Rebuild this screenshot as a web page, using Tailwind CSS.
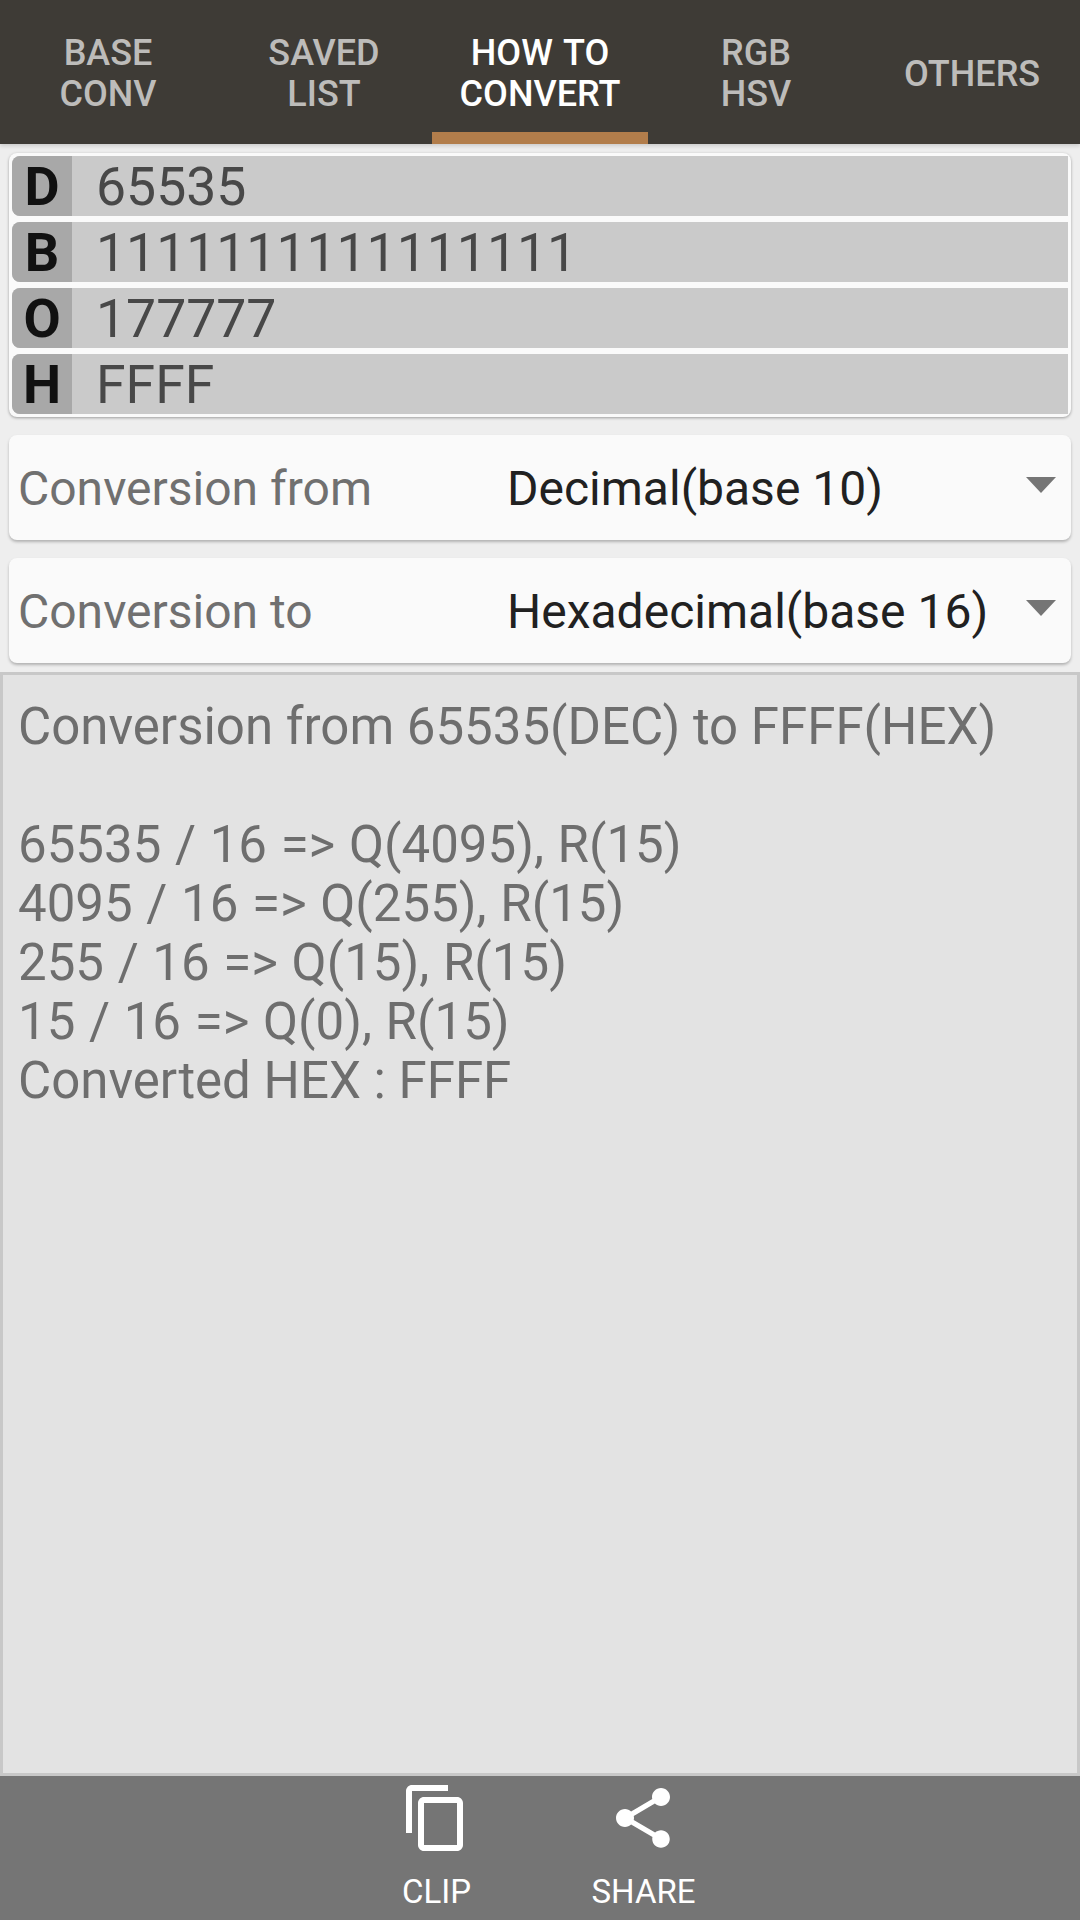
<!DOCTYPE html>
<html lang="en">
<head>
    <meta charset="UTF-8">
    <meta name="viewport" content="width=device-width, initial-scale=1.0">
    <title>How to convert</title>
    <script src="https://cdn.jsdelivr.net/npm/@tailwindcss/browser@4"></script>
</head>
<body class="m-0 bg-[#eeeeee] font-['Roboto',sans-serif]">
    <div class="w-[1080px] h-[1920px] flex flex-col overflow-hidden">
        <!-- tabs -->
        <div class="h-[144px] shrink-0 bg-[#3e3b36] flex text-[36px] leading-[41px] font-medium text-[#bdbcba] text-center shadow-[0_2px_4px_rgba(0,0,0,0.15)] relative">
            <div class="w-[216px] flex items-center justify-center pt-[4px]">BASE<br>CONV</div>
            <div class="w-[216px] flex items-center justify-center pt-[4px]">SAVED<br>LIST</div>
            <div class="w-[216px] flex items-center justify-center text-white border-b-[12px] border-[#b27d4b] pt-[16px] [word-spacing:2px]">HOW TO<br>CONVERT</div>
            <div class="w-[216px] flex items-center justify-center pt-[4px]">RGB<br>HSV</div>
            <div class="w-[216px] flex items-center justify-center pt-[4px]">OTHERS</div>
        </div>

        <!-- values -->
        <div class="mt-[9px] mx-[9px] h-[264px] shrink-0 rounded-[8px] bg-[#fafafa] p-[3px] flex flex-col gap-[6px] shadow-[0_1px_3px_rgba(0,0,0,0.35)]">
            <div class="h-[60px] flex bg-[#cacaca] rounded-l-[8px]">
                <div class="w-[60px] pt-[2px] bg-[#a8a8a8] rounded-l-[8px] flex items-center justify-center text-[54px] leading-[58px] font-bold text-[#111111]">D</div>
                <div class="pl-[24px] pt-[2px] flex items-center text-[53.5px] leading-[58px] text-[#484848]">65535</div>
            </div>
            <div class="h-[60px] flex bg-[#cacaca] rounded-l-[8px]">
                <div class="w-[60px] pt-[2px] bg-[#a8a8a8] rounded-l-[8px] flex items-center justify-center text-[54px] leading-[58px] font-bold text-[#111111]">B</div>
                <div class="pl-[24px] pt-[2px] flex items-center text-[53.5px] leading-[58px] text-[#484848]">1111111111111111</div>
            </div>
            <div class="h-[60px] flex bg-[#cacaca] rounded-l-[8px]">
                <div class="w-[60px] pt-[2px] bg-[#a8a8a8] rounded-l-[8px] flex items-center justify-center text-[54px] leading-[58px] font-bold text-[#111111]">O</div>
                <div class="pl-[24px] pt-[2px] flex items-center text-[53.5px] leading-[58px] text-[#484848]">177777</div>
            </div>
            <div class="h-[60px] flex bg-[#cacaca] rounded-l-[8px]">
                <div class="w-[60px] pt-[2px] bg-[#a8a8a8] rounded-l-[8px] flex items-center justify-center text-[54px] leading-[58px] font-bold text-[#111111]">H</div>
                <div class="pl-[24px] pt-[2px] flex items-center text-[53.5px] leading-[58px] text-[#484848]">FFFF</div>
            </div>
        </div>

        <!-- selects -->
        <div class="mt-[18px] mx-[9px] h-[105px] shrink-0 rounded-[8px] bg-[#fafafa] flex items-center text-[48px] shadow-[0_2px_3px_rgba(0,0,0,0.25)]">
            <div class="w-[498px] pl-[9px] pt-[2px] text-[#707070]">Conversion from</div>
            <div class="flex-1 pt-[2px] text-[#212121]">Decimal(base 10)</div>
            <svg class="w-[30px] h-[16px] mr-[15px] mb-[6px]" viewBox="0 0 30 16"><path d="M0 0H30L15 16Z" fill="#757575"/></svg>
        </div>
        <div class="mt-[18px] mx-[9px] h-[105px] shrink-0 rounded-[8px] bg-[#fafafa] flex items-center text-[48px] shadow-[0_2px_3px_rgba(0,0,0,0.25)]">
            <div class="w-[498px] pl-[9px] pt-[2px] text-[#707070]">Conversion to</div>
            <div class="flex-1 pt-[2px] text-[#212121]">Hexadecimal(base 16)</div>
            <svg class="w-[30px] h-[16px] mr-[15px] mb-[6px]" viewBox="0 0 30 16"><path d="M0 0H30L15 16Z" fill="#757575"/></svg>
        </div>

        <!-- explanation -->
        <div class="mt-[9px] flex-1 bg-[#e3e3e3] border-[3px] border-[#c8c8c8] pl-[15px] pt-[22px] text-[51px] leading-[59px] text-[#6e6e6e]">
            <div class="mb-[59px]">Conversion from 65535(DEC) to FFFF(HEX)</div>
            <div class="[word-spacing:1px]">65535 / 16 =&gt; Q(4095), R(15)</div>
            <div class="[word-spacing:1px]">4095 / 16 =&gt; Q(255), R(15)</div>
            <div class="[word-spacing:1px]">255 / 16 =&gt; Q(15), R(15)</div>
            <div class="[word-spacing:1px]">15 / 16 =&gt; Q(0), R(15)</div>
            <div>Converted HEX : FFFF</div>
        </div>

        <!-- bottom bar -->
        <div class="h-[144px] shrink-0 bg-[#757575] flex justify-center text-white text-[33px] leading-[38px]">
            <div class="w-[207px] flex flex-col items-center pt-[6px]">
                <svg class="w-[72px] h-[72px] mr-[1px]" viewBox="0 0 24 24" fill="#ffffff"><path d="M16 1H4c-1.100 0-2 .9-2 2v14h2V3h12V1zm3 4H8c-1.100 0-2 .9-2 2v14c0 1.100.9 2 2 2h11c1.100 0 2-.9 2-2V7c0-1.100-.9-2-2-2zm0 16H8V7h11v14z"/></svg>
                <div class="mt-[19px]">CLIP</div>
            </div>
            <div class="w-[207px] flex flex-col items-center pt-[6px]">
                <svg class="w-[72px] h-[72px] mr-[1px]" viewBox="0 0 24 24" fill="#ffffff"><path d="M18 16.080c-.76 0-1.440.3-1.960.77L8.910 12.700c.05-.23.090-.46.090-.7s-.04-.47-.09-.7l7.050-4.110c.54.5 1.250.81 2.040.81 1.660 0 3-1.340 3-3s-1.340-3-3-3-3 1.340-3 3c0 .24.040.47.090.7L8.040 9.810C7.500 9.310 6.790 9 6 9c-1.660 0-3 1.340-3 3s1.340 3 3 3c.79 0 1.500-.31 2.040-.81l7.120 4.160c-.05.21-.08.43-.08.65 0 1.610 1.310 2.920 2.920 2.920 1.610 0 2.920-1.310 2.920-2.920s-1.310-2.920-2.920-2.920z"/></svg>
                <div class="mt-[19px]">SHARE</div>
            </div>
        </div>
    </div>
</body>
</html>
